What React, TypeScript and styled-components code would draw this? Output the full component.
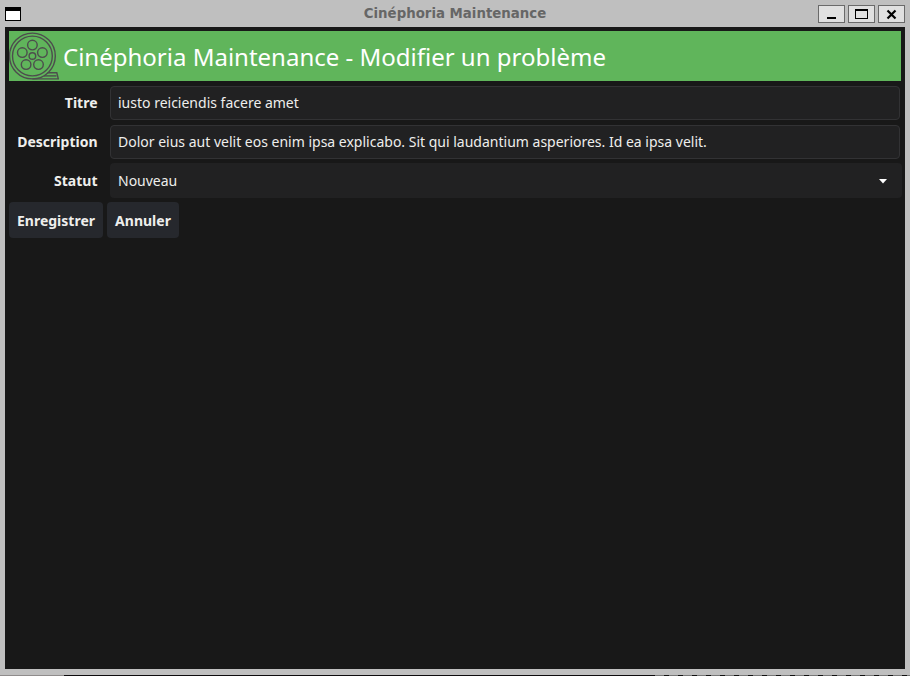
import React from "react";
import styled, { createGlobalStyle } from "styled-components";

const GlobalStyle = createGlobalStyle`
  * { box-sizing: border-box; }
  body { margin: 0; overflow: hidden; background: #bfbfbf; }
`;

const Window = styled.div`
  display: flex;
  flex-direction: column;
  width: 910px;
  height: 676px;
  background: #bfbfbf;
  font-family: "Noto Sans", sans-serif;
  font-size: 14px;
  color: #eeeeec;
`;

const TitleBar = styled.header`
  display: flex;
  align-items: center;
  flex: none;
  height: 27px;
  padding: 0 5px;
`;

const TitleSide = styled.div<{ $end?: boolean }>`
  display: flex;
  width: 87px;
  gap: 3px;
  padding-top: 1px;
  justify-content: ${(p) => (p.$end ? "flex-end" : "flex-start")};
`;

const WindowTitle = styled.div`
  flex: 1;
  text-align: center;
  font: bold 13.33px/26px "DejaVu Sans", sans-serif;
  color: #666666;
`;

const WindowIcon = styled.span`
  width: 16px;
  height: 14px;
  background: #ffffff;
  border: 1px solid #000000;
  border-top-width: 4px;
`;

const WindowButton = styled.button`
  display: flex;
  width: 27px;
  height: 18px;
  padding: 0;
  background: #e0e0e0;
  border: 1px solid #6a6a6a;
`;

const Client = styled.main`
  display: flex;
  flex-direction: column;
  flex: none;
  height: 642px;
  margin: 0 5px;
  padding: 4px 4px 0;
  background: #181818;
`;

const Banner = styled.div`
  display: flex;
  align-items: center;
  flex: none;
  height: 50px;
  gap: 4px;
  background: #60b55b;
`;

const Heading = styled.h1`
  margin: 0;
  padding-top: 2px;
  font-size: 24px;
  font-weight: 400;
  line-height: 50px;
  color: #ffffff;
  white-space: nowrap;
`;

const Form = styled.div`
  display: grid;
  grid-template-columns: 88.5px 793px;
  grid-auto-rows: 34px;
  column-gap: 12.5px;
  row-gap: 5px;
  margin-top: 5px;
`;

const Label = styled.label`
  font-weight: 700;
  line-height: 34px;
  text-align: right;
`;

const Field = styled.div`
  width: 790px;
  padding: 0 7px;
  line-height: 32px;
  background: #212122;
  border: 1px solid #323234;
  border-radius: 4px;
  white-space: nowrap;
`;

const Select = styled.div`
  display: flex;
  align-items: center;
  justify-content: space-between;
  width: 792px;
  height: 35px;
  margin-top: -1px;
  padding: 0 14px 0 8px;
  background: #212122;
  border-radius: 4px;
`;

const Actions = styled.div`
  display: flex;
  gap: 4px;
  margin-top: 4px;
`;

const ActionButton = styled.button<{ $width: number }>`
  width: ${(p) => p.$width}px;
  height: 36px;
  padding: 2px 0 0;
  background: #26282d;
  border: 0;
  border-radius: 4px;
  font: 700 14px/34px "Noto Sans", sans-serif;
  color: #eeeeec;
`;

const BottomEdge = styled.div`
  display: flex;
  flex: none;
  height: 1px;
  margin-top: 6px;
  padding-left: 64px;
  background: #8f8c8c;
`;

const Backdrop = styled.div`
  flex: 1;
  background: repeating-linear-gradient(90deg, #777777 0 9px, #111111 9px 14px) right / 255px 1px no-repeat #0d0b0d;
`;

const holes = [
  [23.4, 14.1],
  [33.4, 21.6],
  [29.5, 33.6],
  [17.1, 33.6],
  [13.3, 21.6],
];

function ReelLogo() {
  return (
    <svg width="50" height="50" viewBox="0 0 50 50" fill="none" stroke="#4d4d4d" strokeWidth="1.4">
      <circle cx="23.4" cy="25" r="22.9" />
      <circle cx="23.4" cy="25" r="19.9" />
      {holes.map(([x, y]) => (
        <circle key={`${x}-${y}`} cx={x} cy={y} r="4.8" />
      ))}
      <circle cx="23.4" cy="25" r="3.3" />
      <path d="M38.5 41.8H47.8L49.3 47.9H23.4" />
      <path d="M35 44.9H47.5" />
    </svg>
  );
}

export default function App() {
  return (
    <>
      <GlobalStyle />
      <Window>
        <TitleBar>
          <TitleSide>
            <WindowIcon />
          </TitleSide>
          <WindowTitle>Cinéphoria Maintenance</WindowTitle>
          <TitleSide $end>
            <WindowButton aria-label="Réduire">
              <svg width="25" height="16"><path d="M8 11h9v2H8z" /></svg>
            </WindowButton>
            <WindowButton aria-label="Agrandir">
              <svg width="25" height="16" shapeRendering="crispEdges">
                <path d="M6 3h13v10H6zM7 5v7h11V5z" fillRule="evenodd" />
              </svg>
            </WindowButton>
            <WindowButton aria-label="Fermer">
              <svg width="25" height="16"><path d="M8.5 4.5l8 8M16.5 4.5l-8 8" stroke="#000" strokeWidth="2.2" /></svg>
            </WindowButton>
          </TitleSide>
        </TitleBar>
        <Client>
          <Banner>
            <ReelLogo />
            <Heading>Cinéphoria Maintenance - Modifier un problème</Heading>
          </Banner>
          <Form>
            <Label>Titre</Label>
            <Field>iusto reiciendis facere amet</Field>
            <Label>Description</Label>
            <Field>Dolor eius aut velit eos enim ipsa explicabo. Sit qui laudantium asperiores. Id ea ipsa velit.</Field>
            <Label>Statut</Label>
            <Select>
              Nouveau
              <svg width="10" height="6"><path d="M1 1h8L5 5.5z" fill="#ffffff" /></svg>
            </Select>
          </Form>
          <Actions>
            <ActionButton $width={94}>Enregistrer</ActionButton>
            <ActionButton $width={72}>Annuler</ActionButton>
          </Actions>
        </Client>
        <BottomEdge>
          <Backdrop />
        </BottomEdge>
      </Window>
    </>
  );
}
